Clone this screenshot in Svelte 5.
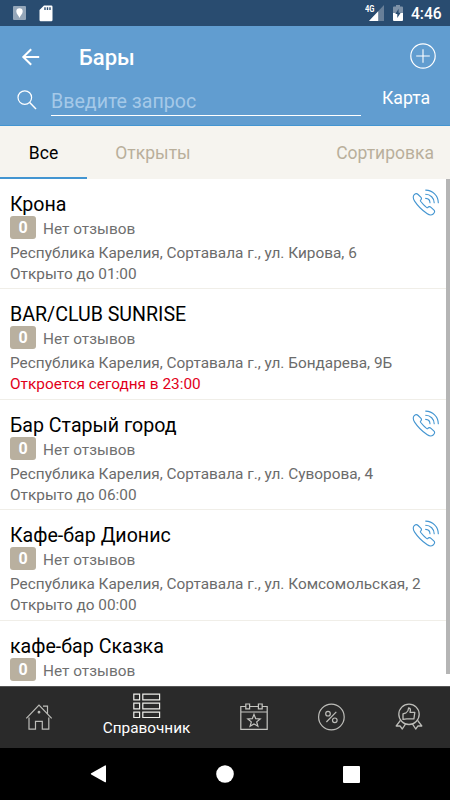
<script lang="ts">
  type Place = { name: string; address?: string; hours?: string; closed?: boolean; phone?: boolean };

  const city = 'Республика Карелия, Сортавала г., ';

  const places: Place[] = [
    { name: 'Крона', address: city + 'ул. Кирова, 6', hours: 'Открыто до 01:00', phone: true },
    { name: 'BAR/CLUB SUNRISE', address: city + 'ул. Бондарева, 9Б', hours: 'Откроется сегодня в 23:00', closed: true },
    { name: 'Бар Старый город', address: city + 'ул. Суворова, 4', hours: 'Открыто до 06:00', phone: true },
    { name: 'Кафе-бар Дионис', address: city + 'ул. Комсомольская, 2', hours: 'Открыто до 00:00', phone: true },
    { name: 'кафе-бар Сказка' },
  ];

  let tab = 'all';
  let query = '';
</script>

<div class="screen">
  <div class="status">
    <svg class="pin" width="13" height="14" viewBox="0 0 13 14">
      <rect width="13" height="14" rx="1" fill="#94a6b9" />
      <path d="M6.5 12 C5.8 9.3 3.3 8 3.3 5.4 A3.2 3.2 0 0 1 9.7 5.4 C9.7 8 7.2 9.3 6.5 12Z" fill="#fff" />
    </svg>
    <svg class="sd" width="14" height="17" viewBox="0 0 14 17">
      <path d="M5 0.5 H12.3 Q13.5 0.5 13.5 1.7 V15 Q13.5 16.2 12.3 16.2 H1.7 Q.5 16.2 .5 15 V5Z" fill="#fff" />
      <path d="M6 2.2V5M8.5 2.2V5M11 2.2V5" stroke="#294c70" stroke-width="1.4" />
    </svg>
    <svg class="signal" width="21" height="18" viewBox="0 0 21 18">
      <path d="M19 1 V17 H4Z" fill="#687f98" />
      <path d="M13.2 7.2 V17 H4Z" fill="#fff" />
      <text x="0" y="8" fill="#fff" font-size="8.5" font-weight="700" textLength="9.5" lengthAdjust="spacingAndGlyphs">4G</text>
    </svg>
    <svg class="battery" width="10" height="16" viewBox="0 0 10 16">
      <path d="M0 2.5 Q0 1.6 1 1.6 H3 V0 H7 V1.6 H9 Q10 1.6 10 2.5 V9 H0Z" fill="#7e92a8" />
      <path d="M0 8 H10 V15 Q10 16 9 16 H1 Q0 16 0 15Z" fill="#fff" />
      <path d="M5.6 3.8 L2.3 9 H4.3 V13 L7.7 7.8 H5.6Z" fill="#294c70" />
    </svg>
    <span class="clock">4:46</span>
  </div>

  <header>
    <div class="bar">
      <svg class="back" width="20" height="18" viewBox="0 0 20 18">
        <path d="M10.2 1.3 L2.3 9 L10.2 16.7 M2.3 9 H18.2" fill="none" stroke="#fff" stroke-width="2" />
      </svg>
      <h1>Бары</h1>
      <svg class="add" width="28" height="28" viewBox="0 0 28 28" fill="none" stroke="#fff">
        <circle cx="14" cy="14" r="12.2" stroke-width="1.2" />
        <path d="M14 7.2 V20.8 M7.2 14 H20.8" stroke-width="1.1" />
      </svg>
    </div>
    <div class="search">
      <svg class="glass" width="20" height="20" viewBox="0 0 20 20" fill="none" stroke="#fff" stroke-width="1.2">
        <circle cx="7.8" cy="7.6" r="6.8" />
        <path d="M12.7 12.5 L19 19" stroke-width="1.5" />
      </svg>
      <input type="text" bind:value={query} placeholder="Введите запрос" />
      <span class="map">Карта</span>
    </div>
  </header>

  <nav class="tabs">
    <button class="all" class:active={tab === 'all'} on:click={() => (tab = 'all')}>Все</button>
    <button class="open" class:active={tab === 'open'} on:click={() => (tab = 'open')}>Открыты</button>
    <span class="sort">Сортировка</span>
  </nav>

  <main>
    <div class="list">
      {#each places as place}
        <article>
          <div class="info">
            <h2>{place.name}</h2>
            <div class="rating">
              <span class="score">0</span>
              <span class="reviews">Нет отзывов</span>
            </div>
            {#if place.address}
              <p>{place.address}</p>
              <p class="hours" class:closed={place.closed}>{place.hours}</p>
            {/if}
          </div>
          {#if place.phone}
            <svg class="phone" width="28" height="28" viewBox="0 0 28 28" fill="none" stroke="#4395d1" stroke-width="1.1" stroke-linecap="round" stroke-linejoin="round">
              <path d="M2.1 5.8 C3.3 4.4 4.8 4.2 6.1 5.5 L9 8.4 C10 9.6 9.7 10.3 8.3 11.6 C8.1 12.4 14.6 18.9 15.4 18.8 C16.8 17.3 18 17.4 19 18.3 L22 21.2 C23.2 22.5 22.4 24 21.2 25 C19.5 26.4 17.3 26.2 15.3 24.8 C10.8 21.7 5.8 17 2.6 12.1 C1.1 9.8 .8 7.6 2.1 5.8Z" />
              <path d="M13.7 9.4 A4.5 4.5 0 0 1 18 13.7 M13.7 5.3 A8.5 8.5 0 0 1 22.2 13.7 M13.7 1.1 A12.6 12.6 0 0 1 26.3 13.7" />
            </svg>
          {/if}
        </article>
      {/each}
    </div>
    <div class="track"><div class="thumb"></div></div>
  </main>

  <footer>
    <div class="item">
      <svg width="28" height="28" viewBox="0 0 28 28" fill="none" stroke="#bdbdb9" stroke-width="1.2">
        <path d="M1.3 15.4 L14 2.2 L26.7 15.4 M4 14.4 V26.2 H10.5 V18.3 H17.3 V26.2 H23.8 V14.4 M18 3.2 H22.5 V10.5" />
        <circle cx="14" cy="9.2" r=".8" fill="#bdbdb9" />
      </svg>
    </div>
    <div class="item current">
      <svg width="28" height="26" viewBox="0 0 28 26" fill="none" stroke="#eeeeea" stroke-width="1.2">
        <path d="M.8 1.1h5.8v5.8h-5.8zM9.8 1.1h16.8v5.8h-16.8zM.8 10.1h5.8v5.8h-5.8zM9.8 10.1h16.8v5.8h-16.8zM.8 19.1h5.8v5.4h-5.8zM9.8 19.1h16.8v5.4h-16.8z" />
      </svg>
      <span>Справочник</span>
    </div>
    <div class="item">
      <svg width="28" height="28" viewBox="0 0 28 28" fill="none" stroke="#c5c5c1" stroke-width="1.2">
        <path d="M5.8 3.5 H.8 V26.4 H27.2 V3.5 H22.2 M9.8 3.5 H18.2 M.8 9 H27.2 M5.8 1 h3.8 v4.8 h-3.8z M18.4 1 h3.8 v4.8 h-3.8z" />
        <path d="M14 11.4 L15.7 15.7 L20.2 16 L16.7 18.9 L17.9 23.3 L14 20.9 L10.1 23.3 L11.3 18.9 L7.8 16 L12.3 15.7Z" />
      </svg>
    </div>
    <div class="item">
      <svg width="28" height="28" viewBox="0 0 28 28" fill="none" stroke="#bdbdb9" stroke-width="1.2">
        <circle cx="14.4" cy="14" r="12.8" />
        <circle cx="11" cy="10.7" r="2.3" />
        <circle cx="17.8" cy="17.3" r="2.3" />
        <path d="M19.3 8.9 L9.4 19" />
      </svg>
    </div>
    <div class="item">
      <svg width="28" height="28" viewBox="0 0 28 28" fill="none" stroke="#bdbdb9" stroke-width="1.3" stroke-linejoin="round">
        <circle cx="14" cy="11.3" r="10.2" />
        <path d="M5.4 17.3 L1.2 23 L5 22.8 L7.3 26 L10.6 20.8 M22.6 17.3 L26.8 23 L23 22.8 L20.7 26 L17.4 20.8" />
        <path d="M8 10.8 L11 9.8 C13 8.7 13.5 7 13.6 5 C15.6 5.2 15.8 6.8 15 9.3 H19.8 L18.9 15.8 H11.8 L8 16.3Z" />
      </svg>
    </div>
  </footer>

  <div class="system">
    <svg width="17" height="20" viewBox="0 0 17 20"><path d="M15 1.5 Q16 1 16 2.2 V17.5 Q16 18.7 15 18.2 L1.2 10.5 Q.3 9.8 1.2 9.2Z" fill="#fff" /></svg>
    <svg width="18" height="18" viewBox="0 0 18 18"><circle cx="9" cy="9" r="8.8" fill="#fff" /></svg>
    <svg width="17" height="17" viewBox="0 0 17 17"><rect width="17" height="17" rx="1" fill="#fff" /></svg>
  </div>
</div>

<style>
  :global(body) {
    margin: 0;
  }

  .screen {
    width: 450px;
    height: 800px;
    display: flex;
    flex-direction: column;
    overflow: hidden;
    background: #fff;
    font-family: Roboto, sans-serif;
  }

  .screen * {
    box-sizing: border-box;
  }

  svg {
    display: block;
    flex: none;
  }

  .status {
    height: 26px;
    flex: none;
    display: flex;
    align-items: flex-start;
    padding: 4px 9px 0 13px;
    background: #294c70;
    color: #fff;
  }

  .pin {
    margin-top: 2px;
  }

  .sd {
    margin: 1px auto 0 13px;
  }

  .battery {
    margin: 1px 8px 0 7px;
  }

  .clock {
    width: 30px;
    font-size: 15.6px;
    font-weight: 500;
    line-height: 21px;
    white-space: nowrap;
  }

  header {
    height: 100px;
    flex: none;
    background: #619dd0;
    border-bottom: 1px solid #4395d1;
    color: #fff;
  }

  .bar {
    height: 61px;
    display: flex;
    align-items: center;
    padding: 1px 13px 0 21px;
  }

  h1 {
    flex: 1;
    margin: 2px 0 0 38px;
    font-size: 22px;
    font-weight: 500;
    line-height: 26px;
  }

  .add {
    margin-bottom: 2px;
  }

  .search {
    display: flex;
    align-items: flex-start;
    padding-left: 17px;
  }

  .glass {
    margin-top: 3px;
  }

  input {
    width: 310px;
    height: 29px;
    margin-left: 14px;
    padding: 0;
    border: none;
    border-bottom: 1px solid #fff;
    border-radius: 0;
    background: transparent;
    color: #fff;
    font: 19.6px Roboto, sans-serif;
    outline: none;
  }

  input::placeholder {
    color: #a5c9e8;
    opacity: 1;
  }

  .map {
    margin-left: 21px;
    font-size: 17.7px;
    line-height: 22px;
  }

  .tabs {
    height: 53px;
    flex: none;
    display: flex;
    align-items: stretch;
    background: #f6f4ef;
    color: #b9af9b;
    font-size: 17.5px;
  }

  button {
    padding: 2px 0 0;
    border: none;
    border-bottom: 2px solid transparent;
    background: none;
    color: inherit;
    font: inherit;
  }

  .all {
    width: 87px;
  }

  .open {
    width: 132px;
  }

  button.active {
    border-color: #4395d1;
    color: #000;
  }

  .sort {
    margin: auto 16px auto auto;
    line-height: 20px;
  }

  main {
    flex: 1;
    min-height: 0;
    display: flex;
    overflow: hidden;
  }

  .list {
    flex: 1;
    min-width: 0;
    margin-right: -5px;
  }

  article {
    height: 110.4px;
    display: flex;
    padding: 13px 10px 0 10px;
    border-bottom: 1px solid #f0eee8;
  }

  article:last-child {
    border: none;
  }

  /* long addresses run on under the phone icon */
  .info {
    flex: 1;
    min-width: 0;
  }

  h2 {
    height: 24px;
    margin: 0;
    font-size: 19.6px;
    font-weight: 400;
    line-height: 26px;
    color: #000;
  }

  .rating {
    display: flex;
    gap: 7px;
    height: 23px;
    font-size: 15.36px;
    color: #707070;
  }

  .reviews {
    line-height: 27px;
  }

  .score {
    width: 26px;
    height: 23px;
    border-radius: 3px;
    background: #b9b09f;
    color: #fff;
    font-size: 16px;
    font-weight: 700;
    line-height: 24px;
    text-align: center;
  }

  p {
    margin: 4px 0 0;
    font-size: 15.36px;
    line-height: 21px;
    color: #6b6b6b;
    white-space: nowrap;
  }

  .hours {
    margin: 0;
  }

  .closed {
    color: #e2001a;
  }

  .phone {
    margin-top: -3px;
  }

  .track {
    width: 5px;
    flex: none;
    z-index: 1;
  }

  .thumb {
    height: 495px;
    margin-left: 1px;
    background: #b5b5b5;
  }

  footer {
    height: 62px;
    flex: none;
    display: grid;
    grid-template-columns: 78px 137px 77px 78px 78px;
    background: #2a2a2a;
    border-top: 1px solid #555;
  }

  .item {
    display: flex;
    flex-direction: column;
    align-items: center;
    padding-top: 16px;
  }

  .current {
    padding-top: 6px;
    color: #fff;
    font-size: 15.33px;
    line-height: 18px;
  }

  .system {
    height: 52px;
    flex: none;
    display: flex;
    align-items: center;
    justify-content: space-between;
    padding: 0 90px;
    background: #000;
  }
</style>
